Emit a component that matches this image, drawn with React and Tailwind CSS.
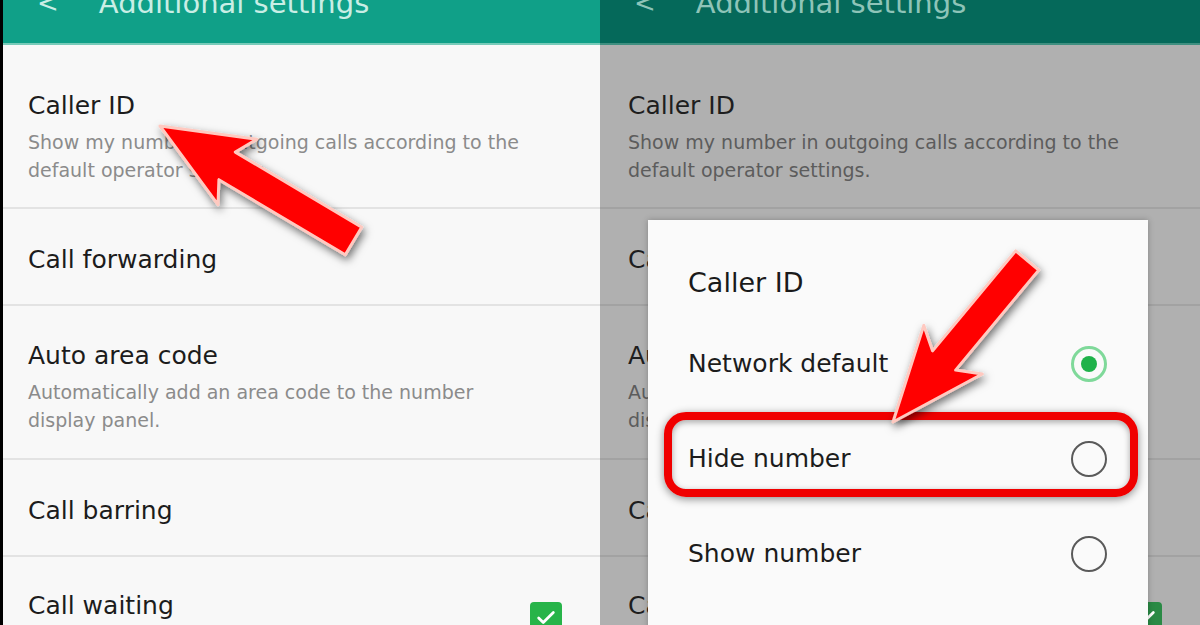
import React from 'react';

const rows = [
  { title: 'Caller ID', sub: ['Show my number in outgoing calls according to the', 'default operator settings.'], h: 'h-[164px]', pt: 'pt-[44px]' },
  { title: 'Call forwarding', h: 'h-[97px]', pt: 'pt-[34px]' },
  { title: 'Auto area code', sub: ['Automatically add an area code to the number', 'display panel.'], h: 'h-[154px]', pt: 'pt-[33px]' },
  { title: 'Call barring', h: 'h-[97px]', pt: 'pt-[34px]' },
  { title: 'Call waiting', h: 'h-[80px]', pt: 'pt-[32px]', check: true },
];

const Header = ({ dim }) => (
  <div className={`h-[45px] shrink-0 flex items-start overflow-hidden ${dim ? 'bg-[#05695a] border-b-2 border-[#3f8f80]' : 'bg-[#10a088] border-b-2 border-[#78cbb9]'}`}>
    <div className={`flex items-center gap-[40px] pl-[34px] -mt-[17px] text-[29px] leading-[40px] ${dim ? 'text-[#8ec4b8]' : 'text-[#c9eee5]'}`}>
      <span className="text-[26px]">&lt;</span>
      <span>Additional settings</span>
    </div>
  </div>
);

const Check = ({ dim }) => (
  <div className={`w-[32px] h-[32px] rounded-[4px] flex items-center justify-center ${dim ? 'bg-[#2a8a45]' : 'bg-[#27b449]'}`}>
    <svg width="22" height="22" viewBox="0 0 24 24" fill="none" stroke="white" strokeWidth="3" strokeLinecap="round" strokeLinejoin="round">
      <path d="M4 12l5 5L20 6" />
    </svg>
  </div>
);

const Pane = ({ dim }) => (
  <div className={`flex flex-col ${dim ? 'bg-[#b0b0b0]' : 'bg-[#f8f8f8]'}`}>
    {rows.map((r, i) => (
      <div
        key={r.title}
        className={`${r.h} ${r.pt} shrink-0 ${dim ? 'pl-[28px]' : 'pl-[25px]'} pr-[38px] flex items-start justify-between ${i < rows.length - 1 ? (dim ? 'border-b-2 border-[#a2a2a2]' : 'border-b-2 border-[#e3e3e3]') : ''}`}
      >
        <div>
          <div className={`text-[25px] leading-[34px] ${dim ? 'text-[#1e1e1e]' : 'text-[#1c1c1c]'}`}>{r.title}</div>
          {r.sub && (
            <div className={`text-[19px] leading-[28px] mt-[5px] ${dim ? 'text-[#5c5c5c]' : 'text-[#8b8b8b]'}`}>
              {r.sub.map((s) => (
                <div key={s}>{s}</div>
              ))}
            </div>
          )}
        </div>
        {r.check && <div className="mt-[13px]"><Check dim={dim} /></div>}
      </div>
    ))}
  </div>
);

const Radio = ({ on }) => (
  <div className={`w-[36px] h-[36px] rounded-full flex items-center justify-center ${on ? 'border-[3px] border-[#7fd99a]' : 'border-2 border-[#5a5a5a]'}`}>
    {on && <div className="w-[16px] h-[16px] rounded-full bg-[#1fb24a]" />}
  </div>
);

const Dialog = () => (
  <div className="absolute left-[48px] top-[220px] w-[500px] h-[430px] bg-[#fafafa] shadow-[0_0_6px_rgba(0,0,0,0.25)] flex flex-col pl-[40px] pr-[41px]">
    <div className="text-[27px] leading-[36px] text-[#1a1a1a] font-medium mt-[45px] mb-[15px]">Caller ID</div>
    {[
      ['Network default', true],
      ['Hide number', false],
      ['Show number', false],
    ].map(([t, on]) => (
      <div key={t} className="h-[95px] shrink-0 flex items-center justify-between">
        <span className="text-[25px] text-[#1c1c1c]">{t}</span>
        <Radio on={on} />
      </div>
    ))}
  </div>
);

export default function App() {
  return (
    <div className="relative w-[1200px] h-[625px] overflow-hidden flex bg-black" style={{ fontFamily: '"DejaVu Sans", sans-serif' }}>
      <div className="w-[600px] shrink-0 flex flex-col border-l-[3px] border-black">
        <Header />
        <Pane />
      </div>
      <div className="relative w-[600px] shrink-0 flex flex-col">
        <Header dim />
        <Pane dim />
        <Dialog />
        <div className="absolute left-[64px] top-[412px] w-[474px] h-[85px] rounded-[22px] border-[8px] border-[#f00000] shadow-[0_2px_8px_rgba(0,0,0,0.45),inset_0_2px_6px_rgba(0,0,0,0.35)]" />
      </div>
      <svg className="absolute inset-0 pointer-events-none" width="1200" height="625" viewBox="0 0 1200 625">
        <defs>
          <filter id="sh" x="-20%" y="-20%" width="140%" height="140%">
            <feDropShadow dx="2" dy="4" stdDeviation="4" floodColor="#000" floodOpacity="0.55" />
          </filter>
        </defs>
        <polygon
          points="160,126 256.8,139.3 235.3,152.1 361.7,227.2 345.3,254.8 218.9,179.7 218,204.7"
          fill="#ff0000"
          stroke="#ffc9c0"
          strokeWidth="3"
          strokeLinejoin="round"
          filter="url(#sh)"
        />
        <polygon
          points="893,422 982.2,374 955.6,370.1 1038.7,270.1 1015.7,250.9 932.6,350.9 923.8,325.4"
          fill="#ff0000"
          stroke="#ffc9c0"
          strokeWidth="3"
          strokeLinejoin="round"
          filter="url(#sh)"
        />
      </svg>
    </div>
  );
}
